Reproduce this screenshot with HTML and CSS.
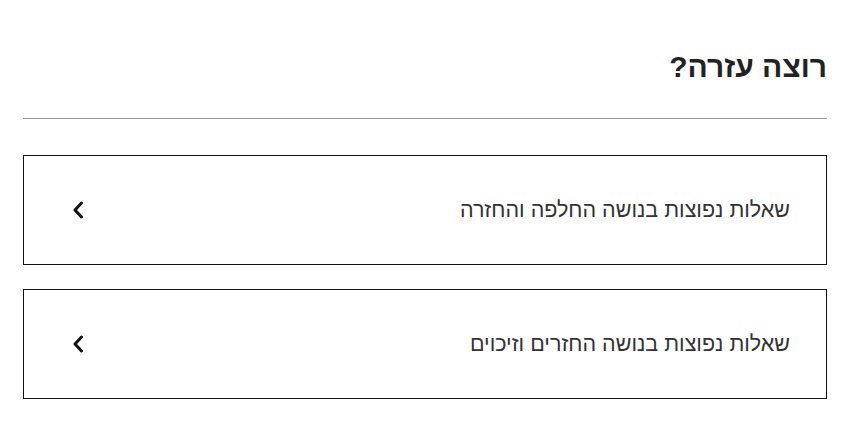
FILE: index.html
```html
<!DOCTYPE html>
<html lang="he" dir="rtl">
<head>
  <meta charset="UTF-8" />
  <meta name="viewport" content="width=device-width, initial-scale=1.0"/>
  <title>רוצה עזרה?</title>
  <link rel="stylesheet" href="styles.css">
</head>
<body>
  <div class="help">
    <h1 class="help-title">רוצה עזרה?</h1>
    <hr class="divider">
    <div class="faq-list">
      <a class="faq-item" href="#">
        <span class="faq-text">שאלות נפוצות בנושה החלפה והחזרה</span>
        <svg class="chevron" width="12" height="18" viewBox="0 0 12 18">
          <path d="M9.5 2 L3 9 L9.5 16" fill="none" stroke="#111" stroke-width="3" stroke-linecap="round" stroke-linejoin="round"/>
        </svg>
      </a>
      <a class="faq-item" href="#">
        <span class="faq-text">שאלות נפוצות בנושה החזרים וזיכוים</span>
        <svg class="chevron" width="12" height="18" viewBox="0 0 12 18">
          <path d="M9.5 2 L3 9 L9.5 16" fill="none" stroke="#111" stroke-width="3" stroke-linecap="round" stroke-linejoin="round"/>
        </svg>
      </a>
    </div>
  </div>
</body>
</html>
```

FILE: styles.css
```css
* {
  box-sizing: border-box;
}

body {
  margin: 0;
  font-family: 'Liberation Sans', Arial, sans-serif;
  background: #fff;
  color: #222;
}

.help {
  padding: 47px 32px 0 23px;
}

.help-title {
  margin: 0;
  font-size: 30px;
  line-height: 40px;
  font-weight: bold;
  color: #222;
}

.divider {
  margin: 31px 0 0 0;
  border: none;
  border-top: 1px solid #9a9a9a;
}

.faq-list {
  margin-top: 36px;
  display: flex;
  flex-direction: column;
  gap: 24px;
}

.faq-item {
  height: 110px;
  border: 1px solid #111;
  padding: 0 36px 0 48px;
  display: flex;
  align-items: center;
  justify-content: space-between;
  text-decoration: none;
  color: #333;
}

.faq-text {
  font-size: 21.5px;
}

.chevron {
  display: block;
}
```
